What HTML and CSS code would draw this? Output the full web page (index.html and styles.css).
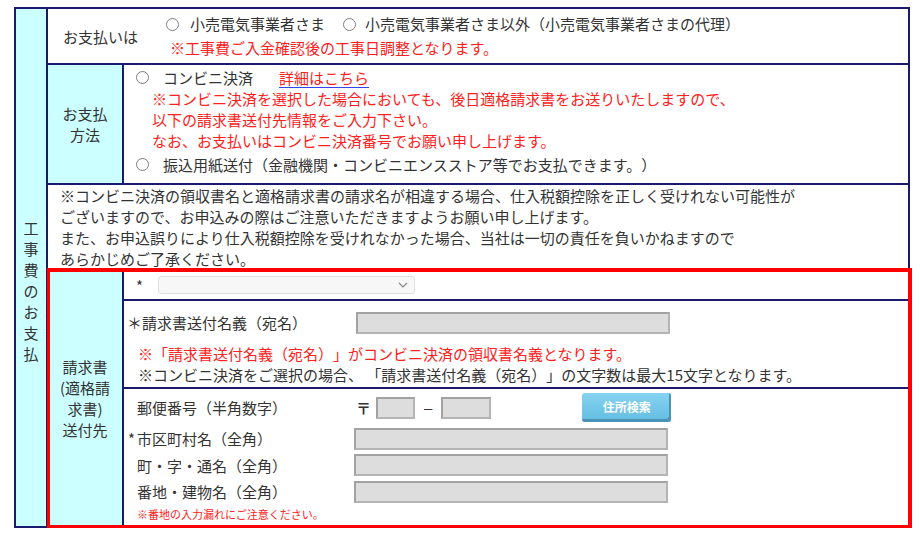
FILE: index.html
```html
<!DOCTYPE html>
<html lang="ja">
<head>
    <meta charset="UTF-8">
    <meta name="viewport" content="width=device-width, initial-scale=1.0">
    <title>工事費のお支払</title>
    <link rel="stylesheet" href="styles.css">
</head>
<body>

<div class="form">
    <!-- left label column -->
    <div class="side">
        <div class="side-text">工<br>事<br>費<br>の<br>お<br>支<br>払</div>
    </div>

    <div class="main">
        <!-- payer -->
        <div class="row row-payer">
            <div class="payer-label">お支払いは</div>
            <div class="payer-body">
                <div class="line"><span class="radio"></span>小売電気事業者さま<span class="radio radio-second"></span>小売電気事業者さま以外（小売電気事業者さまの代理）</div>
                <div class="line red payer-note">※工事費ご入金確認後の工事日調整となります。</div>
            </div>
        </div>

        <!-- payment method -->
        <div class="row row-method">
            <div class="label">お支払<br>方法</div>
            <div class="method-body">
                <div class="line"><span class="radio"></span>コンビニ決済<a href="#" class="detail-link">詳細はこちら</a></div>
                <div class="red method-note">
                    ※コンビニ決済を選択した場合においても、後日適格請求書をお送りいたしますので、<br>
                    以下の請求書送付先情報をご入力下さい。<br>
                    なお、お支払いはコンビニ決済番号でお願い申し上げます。
                </div>
                <div class="line line-transfer"><span class="radio"></span>振込用紙送付（金融機関・コンビニエンスストア等でお支払できます。）</div>
            </div>
        </div>

        <!-- notice -->
        <div class="row notice">
            ※コンビニ決済の領収書名と適格請求書の請求名が相違する場合、仕入税額控除を正しく受けれない可能性が<br>
            ございますので、お申込みの際はご注意いただきますようお願い申し上げます。<br>
            また、お申込誤りにより仕入税額控除を受けれなかった場合、当社は一切の責任を負いかねますので<br>
            あらかじめご了承ください。
        </div>

        <!-- invoice address (highlighted) -->
        <div class="row invoice">
            <div class="label">請求書<br>(適格請<br>求書)<br>送付先</div>
            <div class="invoice-body">
                <div class="sub sub-select">
                    <span class="select-star">*</span>
                    <div class="select">
                        <svg class="chevron" width="10" height="6" viewBox="0 0 10 6"><path d="M1 1 L5 5 L9 1" fill="none" stroke="#888" stroke-width="1.2"/></svg>
                    </div>
                </div>

                <div class="sub sub-name">
                    <div class="name-line">
                        <span class="name-label">＊請求書送付名義（宛名）</span>
                        <span class="input input-wide"></span>
                    </div>
                    <div class="name-notes">
                        <div class="red">※「請求書送付名義（宛名）」がコンビニ決済の領収書名義となります。</div>
                        <div>※コンビニ決済をご選択の場合、 「請求書送付名義（宛名）」の文字数は最大15文字となります。</div>
                    </div>
                </div>

                <div class="sub sub-addr">
                    <div class="addr-row addr-postal">
                        <span class="addr-label">郵便番号（半角数字）</span>
                        <span class="postal-mark">〒</span>
                        <span class="input input-zip1"></span>
                        <span class="dash">–</span>
                        <span class="input input-zip2"></span>
                        <button class="search-btn">住所検索</button>
                    </div>
                    <div class="addr-row">
                        <span class="addr-label"><span class="star">*</span>市区町村名（全角）</span>
                        <span class="input input-wide"></span>
                    </div>
                    <div class="addr-row">
                        <span class="addr-label">町・字・通名（全角）</span>
                        <span class="input input-wide"></span>
                    </div>
                    <div class="addr-row">
                        <span class="addr-label">番地・建物名（全角）</span>
                        <span class="input input-wide"></span>
                    </div>
                    <div class="red addr-note">※番地の入力漏れにご注意ください。</div>
                </div>
            </div>
            <div class="highlight"></div>
        </div>
    </div>
</div>

</body>
</html>
```

FILE: styles.css
```css
body {
    margin: 0;
    padding: 0;
    background-color: #fff;
    font-family: "Noto Sans CJK JP", "Noto Sans", sans-serif;
    font-size: 15px;
    line-height: 21px;
    color: #333;
    text-spacing-trim: space-all;
}
.red {
    color: #ff2020;
}
.form {
    display: flex;
    box-sizing: border-box;
    width: 896px;
    margin: 7px 0 0 14px;
    border: 2px solid #1a1a6e;
}
.side {
    width: 30px;
    flex-shrink: 0;
    background-color: #ccffff;
    border-right: 2px solid #1a1a6e;
    text-align: center;
}
.side-text {
    padding-top: 208px;
}
.main {
    flex: 1;
    display: flex;
    flex-direction: column;
}
.row {
    display: flex;
    border-bottom: 2px solid #1a1a6e;
}
.label {
    width: 74px;
    flex-shrink: 0;
    background-color: #ccffff;
    border-right: 2px solid #1a1a6e;
    display: flex;
    align-items: center;
    justify-content: center;
    text-align: center;
}
.line {
    display: flex;
    align-items: center;
    white-space: nowrap;
}
.radio {
    display: inline-block;
    box-sizing: border-box;
    width: 13px;
    height: 13px;
    border: 1px solid #808080;
    border-radius: 50%;
    background-color: #fff;
    margin-right: 11px;
}

/* payer */
.row-payer {
    height: 54px;
    align-items: center;
}
.payer-label {
    width: 103px;
    padding-left: 15px;
}
.payer-body .line {
    line-height: 24px;
}
.radio-second {
    margin-left: 18px;
    margin-right: 9px;
}
.payer-note {
    padding-left: 4px;
}

/* method */
.row-method {
    height: 118px;
}
.method-body {
    padding: 2px 0 0 12px;
    white-space: nowrap;
}
.method-body .radio {
    margin-right: 14px;
}
.detail-link {
    margin-left: 26px;
    color: #ff2020;
    text-decoration: underline;
    text-decoration-color: #3344ee;
    text-underline-offset: 3px;
}
.method-note {
    padding-left: 16px;
}
.line-transfer {
    margin-top: 3px;
}

/* notice */
.notice {
    display: block;
    height: 83px;
    padding: 0 12px;
    white-space: nowrap;
}

/* invoice */
.invoice {
    position: relative;
    height: 256px;
    border-bottom: none;
}
.invoice-body {
    flex: 1;
    display: flex;
    flex-direction: column;
}
.sub {
    border-bottom: 2px solid #1a1a6e;
}
.sub-select {
    height: 29px;
    display: flex;
    align-items: center;
    padding-left: 12px;
}
.select-star {
    width: 22px;
    line-height: 15px;
    padding-top: 2px;
}
.select {
    position: relative;
    box-sizing: border-box;
    width: 257px;
    height: 18px;
    background-color: #f7f7f7;
    border: 1px solid #e0e0e0;
    border-radius: 3px;
}
.chevron {
    position: absolute;
    right: 6px;
    top: 5px;
}
.sub-name {
    height: 88px;
    box-sizing: border-box;
    padding: 11px 0 0 3px;
}
.name-line {
    display: flex;
    align-items: center;
    height: 21px;
}
.name-label {
    width: 229px;
}
.input {
    display: inline-block;
    box-sizing: border-box;
    background-color: #dddddd;
    border: 2px solid #b4b4b4;
    border-top-color: #a2a2a2;
    border-left-color: #a2a2a2;
}
.input-wide {
    width: 314px;
    height: 22px;
}
.name-notes {
    margin-top: 10px;
    padding-left: 11px;
    white-space: nowrap;
}
.sub-addr {
    flex: 1;
    border-bottom: none;
    padding: 4px 0 0 13px;
}
.addr-row {
    display: flex;
    align-items: center;
    height: 23px;
    margin-bottom: 3.5px;
    white-space: nowrap;
}
.addr-postal {
    height: 29px;
    margin-bottom: 5px;
}
.addr-label {
    width: 217px;
    flex-shrink: 0;
}
.star {
    display: inline-block;
    width: 9px;
    margin-left: -9px;
}
.postal-mark {
    margin-left: 2px;
    font-weight: bold;
}
.input-zip1 {
    width: 39px;
    height: 22px;
    margin-left: 5px;
}
.input-zip2 {
    width: 50px;
    height: 22px;
}
.dash {
    font-family: "Liberation Sans", sans-serif;
    margin: 0 9px;
}
.search-btn {
    width: 89px;
    height: 29px;
    margin-left: 91px;
    padding: 0 0 2px 0;
    border: none;
    border-radius: 3px;
    background: linear-gradient(#86d2f0, #62bde2);
    box-shadow: inset -2px -3px 0 #4a93b9;
    color: #fff;
    font-family: "Noto Sans CJK JP", sans-serif;
    font-size: 12px;
    font-weight: bold;
    cursor: pointer;
}
.addr-note {
    font-size: 11px;
    line-height: 14px;
    margin-top: 1px;
}
.highlight {
    position: absolute;
    top: -2px;
    left: -1px;
    right: -4px;
    bottom: -2px;
    border-style: solid;
    border-color: #ff0000;
    border-width: 4px 4px 3px 3px;
    pointer-events: none;
}
```
